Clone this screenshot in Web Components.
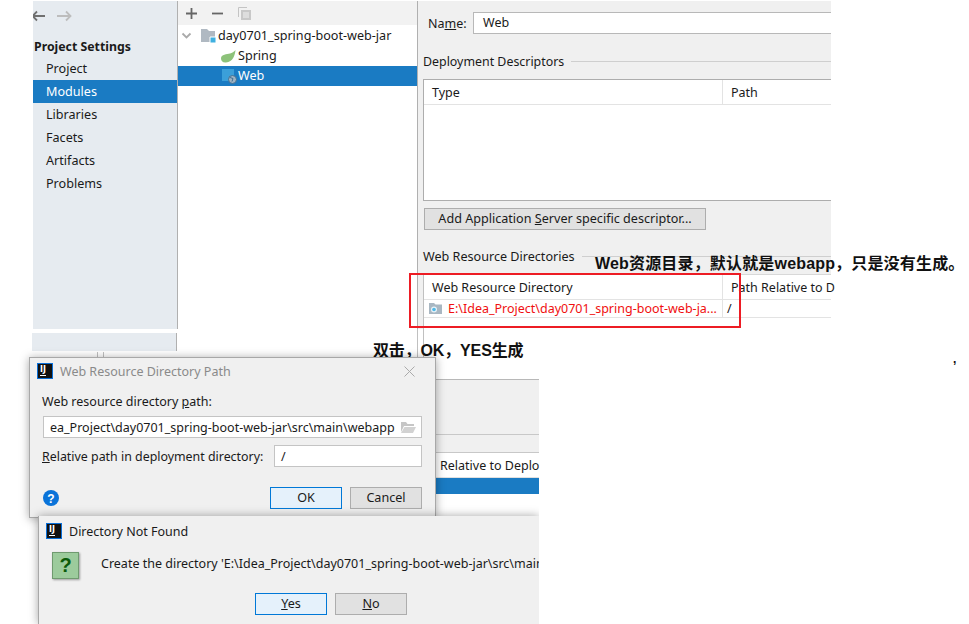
<!DOCTYPE html>
<html><head><meta charset="utf-8"><style>
html,body{margin:0;padding:0;background:#fff}
body{width:969px;height:624px;overflow:hidden;position:relative;font:12.5px "Noto Sans","Noto Sans CJK SC",sans-serif;color:#1a1a1a}
</style></head><body>
<ide-collage></ide-collage>
<script>
const UI='"Noto Sans","Noto Sans CJK SC",sans-serif';
class IdeSidebar extends HTMLElement{constructor(){super();this.attachShadow({mode:'open'}).innerHTML=`<style>
:host{display:flex;flex-direction:column;width:144px;background:#e6ebf0;border-right:1px solid #b0b0b0;height:100%;font:12.6px ${UI};color:#1a1a1a;flex:none}
.nav{height:30px;display:flex;gap:8px;align-items:center;flex:none;overflow:hidden}
h4{margin:0;font:bold 12.3px/16px ${UI};padding:8px 0 2px 1px;color:#1a1a1a}
.i{height:23.1px;line-height:23px;padding-left:13px}
.s{background:#1a7bc3;color:#fff}
</style>
<div class="nav"><svg width="14" height="12" viewBox="0 0 14 12" style="margin-left:-2px;flex:none"><path d="M14 6H2M6 1.500 1.500 6 6 10.500" fill="none" stroke="#707070" stroke-width="1.800"/></svg><svg width="16" height="12" viewBox="0 0 16 12" style="margin-left:3px;flex:none"><path d="M1 6h13M10 1.500 14.500 6 10 10.500" fill="none" stroke="#bdbdbd" stroke-width="1.800"/></svg></div>
<h4>Project Settings</h4>
<div class="i">Project</div><div class="i s">Modules</div><div class="i">Libraries</div><div class="i">Facets</div><div class="i">Artifacts</div><div class="i">Problems</div>`}}
customElements.define('ide-sidebar',IdeSidebar);
class IdeTree extends HTMLElement{constructor(){super();this.attachShadow({mode:'open'}).innerHTML=`<style>
:host{display:block;width:239px;height:100%;background:#fff;border-right:1px solid #b0b0b0;font:12.6px ${UI};color:#1a1a1a;flex:none}
.bar{height:24px;background:#f2f2f2;display:flex;align-items:center;padding-left:8px;gap:15px}
.r{height:20px;display:flex;align-items:center;line-height:20px;white-space:nowrap}
.s{background:#1a7bc3;color:#fff}
svg{flex:none}
</style>
<div class="bar">
<svg width="11" height="11" viewBox="0 0 11 11"><path d="M5.500 0v11M0 5.500h11" stroke="#666" stroke-width="1.800"/></svg>
<svg width="11" height="11" viewBox="0 0 11 11"><path d="M0 5.500h11" stroke="#666" stroke-width="1.800"/></svg>
<svg width="13" height="13" viewBox="0 0 13 13" style="margin-left:0"><path d="M.5 10V.5H9" fill="none" stroke="#c4c4c4"/><path d="M3 3h10v10H3z" fill="#c8c8c8"/><path d="M5 6h6M5 8h6M5 10h6" stroke="#f2f2f2"/></svg>
</div>
<div class="r" style="height:21px"><svg style="margin-left:3px" width="11" height="8" viewBox="0 0 11 8"><path d="M1.500 1.500 5.500 5.500 9.500 1.500" fill="none" stroke="#aaa" stroke-width="1.800"/></svg>
<svg style="margin-left:9px" width="16" height="14" viewBox="0 0 16 14"><path d="M0 0h6l2 2h6v11H0z" fill="#b0b9c2"/><path d="M9 8h6v6H9z" fill="#3fb0e0" stroke="#fff"/></svg>
<span style="margin-left:1px">day0701_spring-boot-web-jar</span></div>
<div class="r"><svg style="margin-left:43px" width="15" height="13" viewBox="0 0 15 13"><path d="M14.500 0C14 5 12 12 5 12.500 1.500 12.800 0 10.500 0 8.500 0 4 6 4.500 9 3.500 11 2.800 13 1.800 14.500 0z" fill="#8dc27a"/></svg><span style="margin-left:2px">Spring</span></div>
<div class="r s"><svg style="margin-left:44px" width="16" height="15" viewBox="0 0 16 15"><path d="M0 0h12v12H0z" fill="#3b9fd9"/><circle cx="10.500" cy="10.500" r="4" fill="#9fb3c3"/><circle cx="10.500" cy="10.500" r="4" fill="none" stroke="#3f6f92"/><path d="M8 8.500l3 1-1 3" fill="none" stroke="#3f6f92"/></svg><span>Web</span></div>`}}
customElements.define('ide-tree',IdeTree);
class IdeGroup extends HTMLElement{constructor(){super();this.attachShadow({mode:'open'}).innerHTML=`<style>
:host{display:flex;align-items:center;gap:7px;height:16px;white-space:nowrap;font:12.4px ${UI};color:#1a1a1a}
i{flex:1;height:1px;background:#cfcfcf}
</style><slot></slot><i></i>`}}
customElements.define('ide-group',IdeGroup);
class IdeBtn extends HTMLElement{constructor(){super();this.attachShadow({mode:'open'}).innerHTML=`<style>
:host{display:inline-flex;align-items:center;justify-content:center;box-sizing:border-box;height:22px;padding-bottom:2px;border:1px solid #adadad;background:#e1e1e1;font:12.6px ${UI};color:#1a1a1a;white-space:nowrap}
:host([def]){background:#e5f1fb;border-color:#0078d7}
</style><slot></slot>`}}
customElements.define('ide-btn',IdeBtn);
class IdeModule extends HTMLElement{constructor(){super();this.attachShadow({mode:'open'}).innerHTML=`<style>
:host{display:flex;flex-direction:column;background:#f0f0f0;height:100%;font:12.5px ${UI};color:#1a1a1a;padding-left:5px;box-sizing:border-box}
.name{display:flex;align-items:center;height:22px;margin:11px 0 0 5px}
.name>span{width:45px;flex:none}
.inp{flex:1;height:22px;box-sizing:border-box;background:#fff;border:1px solid #b8b8b8;border-right:0;padding-left:9px;line-height:20px}
u{text-underline-offset:1px}
.tb{background:#fff;border:1px solid #adadad;border-right:0;margin-top:10px;height:122px;box-sizing:border-box}
.th{display:flex;height:25px;line-height:26px;border-bottom:1px solid #e3e3e3;box-sizing:border-box}
.th>span:first-child{width:299px;padding-left:8px;box-sizing:border-box;border-right:1px solid #e3e3e3;flex:none}
.th>span:last-child{padding-left:8px;white-space:nowrap}
ide-btn{margin:7px 0 0 1px;width:282px;flex:none}
.tb2{background:#fff;margin-top:9px;flex:1;border-left:1px solid #c0c0c0;border-top:1px solid #d8d8d8}
.tr{display:flex;height:17px;line-height:17px;border-bottom:1px solid #e3e3e3;align-items:center}
.p{width:299px;box-sizing:border-box;border-right:1px solid #e3e3e3;padding-left:5px;display:flex;align-items:center;gap:6px;color:#f01010;height:100%;white-space:nowrap;flex:none}
</style>
<div class="name"><span>Na<u>m</u>e:</span><div class="inp">Web</div></div>
<ide-group style="margin-top:19px">Deployment Descriptors</ide-group>
<div class="tb"><div class="th"><span>Type</span><span>Path</span></div></div>
<ide-btn><span>Add Application <u>S</u>erver specific descriptor...</span></ide-btn>
<ide-group style="margin-top:18px;margin-bottom:1px;font-size:12.6px">Web Resource Directories</ide-group>
<div class="tb2"><div class="th"><span>Web Resource Directory</span><span>Path Relative to D</span></div>
<div class="tr"><div class="p"><svg width="13" height="11" viewBox="0 0 13 11"><path d="M0 0h5l1.500 1.500H13V11H0z" fill="#a9b7c2"/><circle cx="5" cy="6.500" r="3" fill="#e8f2f8"/><circle cx="5" cy="6.500" r="1.800" fill="#4fb9e8"/></svg><span>E:\\Idea_Project\\day0701_spring-boot-web-ja...</span></div><span style="padding-left:4px">/</span></div></div>`}}
customElements.define('ide-module',IdeModule);
class IjIcon extends HTMLElement{constructor(){super();this.attachShadow({mode:'open'}).innerHTML=`<style>
:host{display:block;width:16px;height:16px;box-sizing:border-box;background:#111;border:1px solid #0a6fd8;flex:none;position:relative;color:#fff;font:bold 8px/9px "DejaVu Sans",sans-serif}
b{position:absolute;left:2px;top:1px}
i{position:absolute;left:2px;bottom:2px;width:6px;height:1px;background:#fff}
</style><b>IJ</b><i></i>`}}
customElements.define('ij-icon',IjIcon);
class PathDialog extends HTMLElement{constructor(){super();this.attachShadow({mode:'open'}).innerHTML=`<style>
:host{display:flex;flex-direction:column;position:absolute;left:29px;top:357px;width:407px;height:161px;box-sizing:border-box;background:#f0f0f0;border:1px solid #a8a8a8;box-shadow:0 1px 9px rgba(0,0,0,.35);font:12.5px ${UI};color:#1a1a1a}
.t{display:flex;align-items:center;height:16px;padding-left:7px;gap:7px;color:#8a8a8a;margin-top:5px}
.x{margin-left:auto;margin-right:20px;flex:none}
.l{margin:14px 0 0 12px;height:18px;line-height:18px}
.f{display:flex;align-items:center;margin:5px 13px 0 13px;height:22px;box-sizing:border-box;border:1px solid #c4c4c4;background:#fff;padding-left:6px;white-space:nowrap;flex:none}
.f svg{margin-left:auto;margin-right:5px;flex:none}
.rr{display:flex;align-items:center;margin:7px 13px 0 12px;justify-content:space-between;height:22px;white-space:nowrap}
.rr>span{font-size:12.4px}
.rr .f{margin:0;width:148px}
.b{display:flex;margin:20px 13px 0 13px;align-items:center;height:22px;gap:8px}
.b svg{margin-right:auto}
ide-btn{width:72px}
u{text-underline-offset:1px}
</style>
<div class="t"><ij-icon></ij-icon><span>Web Resource Directory Path</span><svg class="x" width="11" height="11" viewBox="0 0 11 11"><path d="M.5.500l10 10M10.500.500l-10 10" stroke="#aaa" stroke-width="1"/></svg></div>
<div class="l">Web resource directory <u>p</u>ath:</div>
<div class="f"><span>ea_Project\\day0701_spring-boot-web-jar\\src\\main\\webapp</span><svg width="15" height="11" viewBox="0 0 15 11"><path d="M0 0h5l1.500 2H13v2H3L0 10z" fill="#c6c6c6"/><path d="M3.500 5H15l-3 6H0z" fill="#d2d2d2"/></svg></div>
<div class="rr"><span><u>R</u>elative path in deployment directory:</span><div class="f">/</div></div>
<div class="b"><svg width="16" height="16" viewBox="0 0 16 16"><circle cx="8" cy="8" r="8" fill="#0a73d9"/><text x="8" y="12.500" text-anchor="middle" font-size="12" font-family="Liberation Sans" font-weight="bold" fill="#fff">?</text></svg><ide-btn def>OK</ide-btn><ide-btn>Cancel</ide-btn></div>`}}
customElements.define('path-dialog',PathDialog);
class ConfirmDialog extends HTMLElement{constructor(){super();this.attachShadow({mode:'open'}).innerHTML=`<style>
:host{display:flex;flex-direction:column;position:absolute;left:38px;top:516px;width:501px;height:108px;box-sizing:border-box;background:#f0f0f0;border-left:1px solid #a8a8a8;box-shadow:0 0 9px rgba(0,0,0,.35);clip-path:inset(-12px 0 0 -12px);font:12.5px ${UI};color:#1a1a1a}
.t{display:flex;align-items:center;height:16px;margin:7px 0 0 7px;gap:7px}
.m{display:flex;align-items:flex-start;margin:13px 0 0 13px;height:27px;gap:22px;white-space:nowrap}
.m span{line-height:24px}
.q{width:27px;height:27px;box-sizing:border-box;background:#9ccb9c;border:1px solid #6f9a6f;box-shadow:1px 1px 2px rgba(0,0,0,.35);display:flex;align-items:center;justify-content:center;font:bold 20px "Liberation Sans",sans-serif;color:#0b5b0b;flex:none}
.b{display:flex;margin:14px 0 0 216px;gap:8px}
ide-btn{width:72px}
u{text-underline-offset:1px}
</style>
<div class="t"><ij-icon></ij-icon><span>Directory Not Found</span></div>
<div class="m"><div class="q">?</div><span>Create the directory 'E:\\Idea_Project\\day0701_spring-boot-web-jar\\src\\main</span></div>
<div class="b"><ide-btn def><span><u>Y</u>es</span></ide-btn><ide-btn><span><u>N</u>o</span></ide-btn></div>`}}
customElements.define('confirm-dialog',ConfirmDialog);
class IdeCollage extends HTMLElement{constructor(){super();this.attachShadow({mode:'open'}).innerHTML=`<style>
:host{display:block;width:969px;height:624px;position:relative;overflow:hidden;background:#fff}
.main{position:absolute;left:33px;top:1px;width:798px;height:328px;display:flex}
ide-module{flex:1;min-width:0}
.strip{position:absolute;left:32px;top:333px;width:145px;height:18px;background:#e6ebf0;border-right:1px solid #b0b0b0;box-sizing:border-box}
.rest{position:absolute;left:435px;top:379px;width:104px;height:137px;background:#f0f0f0;border-top:1px solid #b8b8b8;font:12.5px ${UI};color:#1a1a1a;box-sizing:border-box;display:flex;flex-direction:column}
.rest .a{height:54px;flex:none;border-bottom:1px solid #c8c8c8}
.rest .c{height:17px;flex:none;border-bottom:1px solid #c8c8c8}
.rest .h{height:24px;line-height:25px;padding-left:5px;white-space:nowrap;background:#fff;border-bottom:1px solid #e0e0e0;flex:none}
.rest .sel{height:16px;background:#1a7bc3;flex:none}
.rest .w{flex:1;background:#fff}
.red{position:absolute;left:409px;top:273px;width:332px;height:55px;box-sizing:border-box;border:2px solid #ed1c24}
.note{position:absolute;font:bold 16px "Liberation Sans","Noto Sans CJK SC",sans-serif;color:#111;white-space:nowrap;line-height:20px}
.v{position:absolute;width:1px;background:#c0c0c0}
</style>
<div class="main"><ide-sidebar></ide-sidebar><ide-tree></ide-tree><ide-module></ide-module></div>
<div class="strip"></div>
<div class="v" style="left:97px;top:352px;height:5px"></div><div class="v" style="left:103px;top:352px;height:5px"></div>
<div class="v" style="left:417px;top:329px;height:28px"></div><div class="v" style="left:423px;top:329px;height:28px"></div>
<div class="rest"><div class="a"></div><div class="c"></div><div class="h">Relative to Deplo</div><div class="sel"></div><div class="w"></div></div>
<div class="red"></div>
<div class="note" style="left:595px;top:254px;letter-spacing:.17px">Web资源目录，默认就是webapp，只是没有生成。</div>
<div class="note" style="left:373px;top:341px;letter-spacing:-.15px">双击，OK，YES生成</div>
<div class="note" style="left:953px;top:349px;font-size:12px">,</div>
<path-dialog></path-dialog>
<confirm-dialog></confirm-dialog>`}}
customElements.define('ide-collage',IdeCollage);
</script></body></html>
